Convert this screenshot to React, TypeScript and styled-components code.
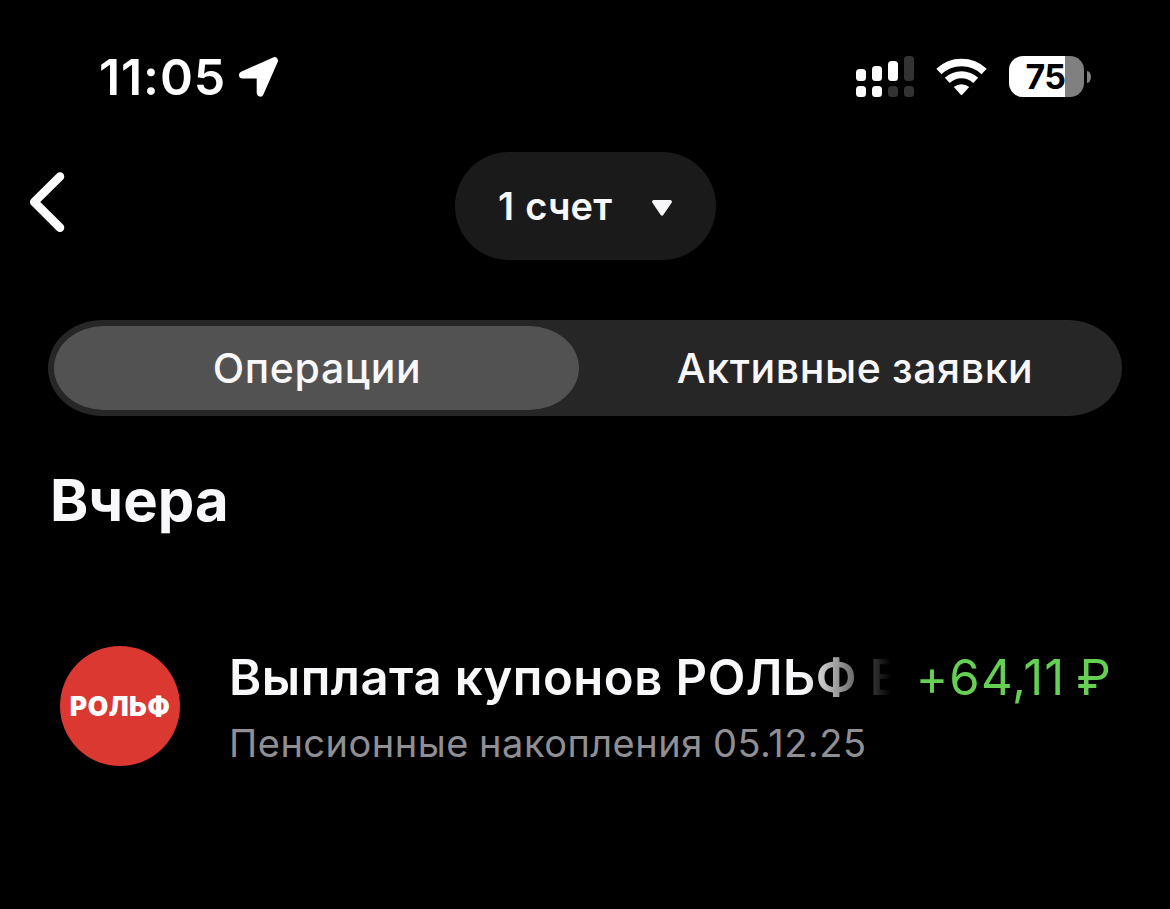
import styled, { createGlobalStyle } from "styled-components";

type TabProps = {
  $active?: boolean;
};

type BarProps = {
  $height: number;
  $on: boolean;
};

const GlobalStyle = createGlobalStyle`
  * {
    box-sizing: border-box;
  }
  body {
    margin: 0;
    background-color: #000;
    color: #f8f8fa;
    font-family: Inter, "Noto Sans", sans-serif;
  }
  button {
    padding: 0;
    border: none;
    background: none;
    color: inherit;
    font-family: inherit;
    cursor: pointer;
  }
`;

const Screen = styled.main`
  width: 1170px;
  height: 909px;
  overflow: hidden;
  background-color: #000;
`;

const StatusBar = styled.div`
  display: flex;
  justify-content: space-between;
  align-items: center;
  height: 152px;
  padding: 1px 79px 0 99px;
`;

const StatusGroup = styled.div`
  display: flex;
  align-items: center;
`;

const Time = styled.span`
  width: 139px;
  font-size: 50px;
  font-weight: 600;
  line-height: 60px;
  letter-spacing: 0.9px;
  color: #fff;
  white-space: nowrap;
`;

const Signal = styled.div`
  display: grid;
  grid-template-columns: repeat(4, 10px);
  grid-template-rows: 25px 11px;
  gap: 5px 6px;
  align-items: end;
  margin-right: 22px;
`;

const SignalBar = styled.span<BarProps>`
  height: ${({ $height }) => $height}px;
  border-radius: 3.5px;
  background-color: ${({ $on }) => ($on ? "#fff" : "#333")};
`;

const Battery = styled.div`
  display: flex;
  align-items: center;
  gap: 3px;
  margin-left: 22px;
`;

const BatteryBody = styled.div`
  display: flex;
  align-items: center;
  justify-content: center;
  width: 75px;
  height: 41px;
  padding-right: 2px;
  border-radius: 14px;
  background: linear-gradient(to right, #fff 56px, #808080 56px);
  color: #000;
  font-size: 34px;
  font-weight: 700;
  line-height: 41px;
  letter-spacing: -0.6px;
`;

const BatteryTip = styled.span`
  width: 4px;
  height: 12px;
  border-radius: 0 4px 4px 0 / 0 6px 6px 0;
  background-color: #808080;
`;

const Header = styled.header`
  display: grid;
  grid-template-columns: 455px 261px 1fr;
  height: 108px;
`;

const BackButton = styled.button`
  display: flex;
  justify-self: start;
  align-self: start;
  padding: 20px 0 0 29px;
`;

const AccountButton = styled.button`
  display: flex;
  align-items: center;
  justify-content: space-between;
  padding: 0 43px;
  border-radius: 54px;
  background-color: #1a1a1a;
`;

const AccountName = styled.span`
  font-size: 38px;
  font-weight: 600;
  letter-spacing: 0.1px;
  word-spacing: 1.5px;
  white-space: nowrap;
`;

const Tabs = styled.div`
  display: grid;
  grid-template-columns: 525px 523px;
  gap: 14px;
  height: 96px;
  margin: 60px 48px 0;
  padding: 6px;
  border-radius: 54px / 48px;
  background-color: #262626;
`;

const Tab = styled.button<TabProps>`
  padding-left: 1px;
  border-radius: 50px / 42px;
  background-color: ${({ $active }) => ($active ? "#525252" : "transparent")};
  font-size: 41px;
  font-weight: 500;
  letter-spacing: 0.6px;
  word-spacing: -1px;
  white-space: nowrap;
`;

const DayTitle = styled.h2`
  margin: 48px 0 0 50px;
  font-size: 58px;
  font-weight: 700;
  line-height: 72px;
`;

const Operation = styled.article`
  display: flex;
  align-items: flex-start;
  margin-top: 110px;
  padding: 0 58px 0 60px;
`;

const Logo = styled.div`
  display: flex;
  flex: none;
  align-items: center;
  justify-content: center;
  width: 120px;
  height: 120px;
  border-radius: 50%;
  background-color: #db3832;
  color: #fff;
  font-size: 26.5px;
  font-weight: 900;
  letter-spacing: 0.5px;
`;

const Details = styled.div`
  flex: none;
  width: 662px;
  margin-left: 49px;
`;

const OperationTitle = styled.h3`
  margin: 0;
  overflow: hidden;
  font-size: 49px;
  font-weight: 600;
  line-height: 63px;
  letter-spacing: 0.5px;
  white-space: nowrap;
  mask-image: linear-gradient(to right, #000 576px, transparent 662px);
`;

const OperationNote = styled.p`
  margin: 10px 0 0;
  color: #8f8f94;
  font-size: 38px;
  line-height: 49px;
  letter-spacing: 0.5px;
  word-spacing: -1px;
  white-space: nowrap;
`;

const Amount = styled.span`
  margin-left: auto;
  color: #65d054;
  font-size: 49px;
  line-height: 63px;
  letter-spacing: 1.2px;
  word-spacing: -4px;
  white-space: nowrap;
`;

const SIGNAL_BARS = [
  { height: 12, on: true },
  { height: 15, on: true },
  { height: 20, on: true },
  { height: 25, on: false },
  { height: 11, on: true },
  { height: 11, on: true },
  { height: 11, on: false },
  { height: 11, on: false },
];

function LocationIcon() {
  return (
    <svg width="42" height="42" viewBox="0 0 42 42">
      <path
        d="M4.5 18.9 36.5 4.7 22.2 37 22.2 18.9Z"
        fill="#fff"
        stroke="#fff"
        strokeWidth="7"
        strokeLinejoin="round"
      />
    </svg>
  );
}

function WifiIcon() {
  return (
    <svg width="51" height="38" viewBox="0 0 51 38">
      <g fill="none" stroke="#fff">
        <path d="M2.9 13.4A33 33 0 0 1 48.1 13.4" strokeWidth="7.6" />
        <path d="M11.3 22.4A20.7 20.7 0 0 1 39.7 22.4" strokeWidth="7" />
      </g>
      <path
        d="M17.8 29.1A11.7 11.7 0 0 1 33.2 29.1L26.2 36.7Q25.5 37.3 24.8 36.7Z"
        fill="#fff"
      />
    </svg>
  );
}

function App() {
  return (
    <Screen>
      <GlobalStyle />
      <StatusBar>
        <StatusGroup>
          <Time>11:05</Time>
          <LocationIcon />
        </StatusGroup>
        <StatusGroup>
          <Signal>
            {SIGNAL_BARS.map((bar, index) => (
              <SignalBar key={index} $height={bar.height} $on={bar.on} />
            ))}
          </Signal>
          <WifiIcon />
          <Battery>
            <BatteryBody>75</BatteryBody>
            <BatteryTip />
          </Battery>
        </StatusGroup>
      </StatusBar>

      <Header>
        <BackButton aria-label="Назад">
          <svg width="38" height="62" viewBox="0 0 38 62">
            <path
              d="M31 4.5 5.2 30 31 55.6"
              fill="none"
              stroke="#fff"
              strokeWidth="8.6"
              strokeLinecap="round"
              strokeLinejoin="round"
            />
          </svg>
        </BackButton>
        <AccountButton>
          <AccountName>1 счет</AccountName>
          <svg width="22" height="22" viewBox="0 0 22 22">
            <path
              d="M2.8 6.7H19.2L11 18.9Z"
              fill="#f8f8fa"
              stroke="#f8f8fa"
              strokeWidth="3.4"
              strokeLinejoin="round"
            />
          </svg>
        </AccountButton>
      </Header>

      <Tabs>
        <Tab $active>Операции</Tab>
        <Tab>Активные заявки</Tab>
      </Tabs>

      <DayTitle>Вчера</DayTitle>

      <Operation>
        <Logo>РОЛЬФ</Logo>
        <Details>
          <OperationTitle>Выплата купонов РОЛЬФ Б</OperationTitle>
          <OperationNote>Пенсионные накопления 05.12.25</OperationNote>
        </Details>
        <Amount>+64,11 ₽</Amount>
      </Operation>
    </Screen>
  );
}

export default App;
